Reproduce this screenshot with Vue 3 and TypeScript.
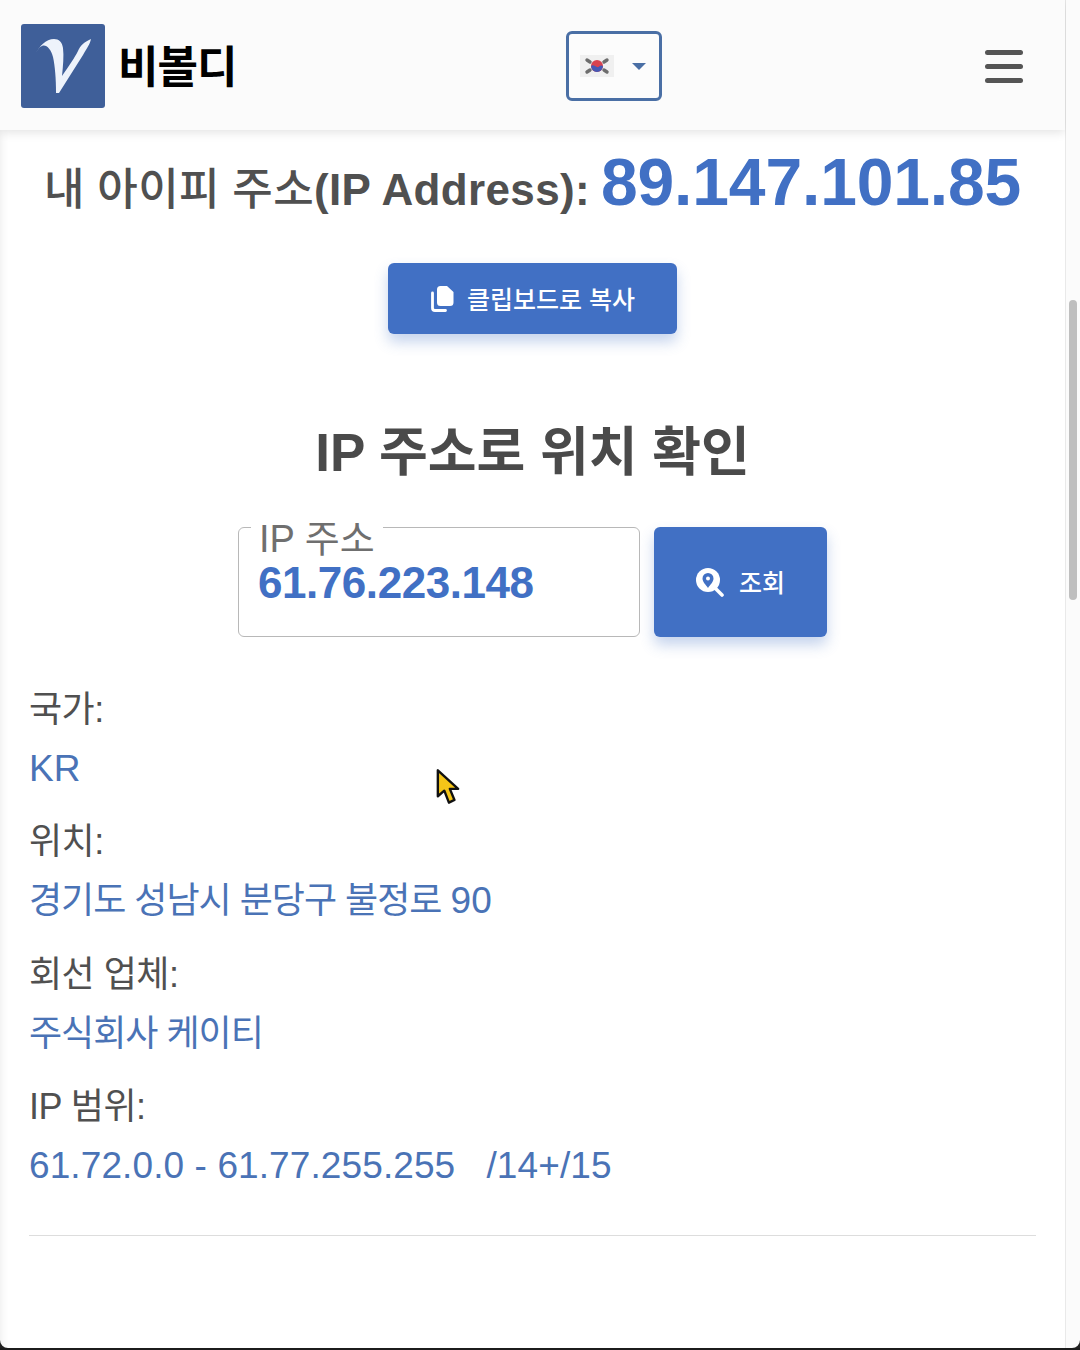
<script setup lang="ts">
interface Row { label: string; value: string; latin?: boolean; suffix?: string }
const rows: Row[] = [
  { label: '국가:', value: 'KR', latin: true },
  { label: '위치:', value: '경기도 성남시 분당구 불정로 ', suffix: '90' },
  { label: '회선 업체:', value: '주식회사 케이티' },
  { label: 'IP 범위:', value: '61.72.0.0 - 61.77.255.255\u00a0\u00a0\u00a0/14+/15', latin: true },
]
</script>

<template>
  <div class="page">
    <div class="main">
      <header class="nav">
        <div class="brand">
          <svg class="logo" viewBox="0 0 84 84" aria-label="logo">
            <rect width="84" height="84" rx="3" fill="#3f5f99" />
            <path d="M14 31 C18 22 25 15 33 15 C38 15 41 18 42 24 C43 32 42 42 41 52 C48 42 54 33 57 27 C59 22 63 18 70 15 C69 20 66 24 62 31 L38 69 L35 69 C35 55 34 42 32 33 C30 25 25 20 21 22 C18 23 16 27 14 31 Z" fill="#eef3fb" />
          </svg>
          <span class="brand-name">비볼디</span>
        </div>
        <button class="lang">
          <svg class="flag" viewBox="0 0 34 22">
            <rect width="34" height="22" fill="#f0f0f0" />
            <g stroke="#6d6d6d" stroke-width="3.4" stroke-linecap="round">
              <path d="M7 5 L10 7" /><path d="M27 5 L24 7" /><path d="M7 17 L10 15" /><path d="M27 17 L24 15" />
            </g>
            <circle cx="17" cy="11" r="6" fill="#d8434f" />
            <path d="M11 11 A6 6 0 0 0 23 11 C20 9 19 13 17 12 C15 11 13 9 11 11 Z" fill="#4658b5" />
          </svg>
          <span class="caret"></span>
        </button>
        <div class="burger"><i></i><i></i><i></i></div>
      </header>

      <section class="ip-line">
        <span class="ip-label">내 아이피 주소<b>(IP Address):</b></span>
        <span class="ip-value">89.147.101.85</span>
      </section>

      <div class="copy-wrap">
        <button class="btn copy">
          <svg class="ic-copy" viewBox="0 0 24 27">
            <path d="M2.500 8 V23 A2.500 2.500 0 0 0 5 25.500 H15.500" fill="none" stroke="#fff" stroke-width="2.800" stroke-linecap="round" />
            <path d="M10.500 1 H17 L23.500 7 V17.500 A3.500 3.500 0 0 1 20 21 H10.500 A3.500 3.500 0 0 1 7 17.500 V4.500 A3.500 3.500 0 0 1 10.500 1 Z" fill="#fff" />
          </svg>
          <span class="btn-text">클립보드로 복사</span>
        </button>
      </div>

      <h2 class="title">IP 주소로 위치 확인</h2>

      <div class="lookup">
        <div class="field">
          <span class="field-label">IP 주소</span>
          <span class="field-value">61.76.223.148</span>
        </div>
        <button class="btn search">
          <svg class="ic-search" viewBox="0 0 30 30">
            <path d="M19 20 L27 28" stroke="#fff" stroke-width="3.600" stroke-linecap="round" />
            <circle cx="13" cy="13" r="12" fill="#fff" />
            <path d="M13 6 A5.500 5.500 0 0 0 7.500 11.500 C7.500 15 11 18 13 21 C15 18 18.500 15 18.500 11.500 A5.500 5.500 0 0 0 13 6 Z" fill="#4170c4" />
            <circle cx="13" cy="11.500" r="2" fill="#fff" />
          </svg>
          <span class="btn-text">조회</span>
        </button>
      </div>

      <dl class="info">
        <div v-for="row in rows" :key="row.label" class="row">
          <dt>{{ row.label }}</dt>
          <dd :class="{ latin: row.latin }">{{ row.value }}<span v-if="row.suffix" class="latin">{{ row.suffix }}</span></dd>
        </div>
      </dl>
      <hr class="rule" />
    </div>

    <aside class="track"><div class="thumb"></div></aside>

    <svg class="cursor" viewBox="0 0 26 40">
      <path d="M2 2 L2 30 L9 24 L14 37 L20 34 L15 22 L24 22 Z" fill="#f5c518" stroke="#111" stroke-width="2.600" stroke-linejoin="round" />
    </svg>
    <svg class="corner corner-r" viewBox="0 0 8 8"><path d="M8 0 V8 H0 A8 8 0 0 0 8 0 Z" fill="#222" /></svg>
    <svg class="corner corner-l" viewBox="0 0 8 8"><path d="M0 0 V8 H8 A8 8 0 0 1 0 0 Z" fill="#222" /></svg>
  </div>
</template>

<style>
html, body { margin: 0; background: #fff; overflow: hidden; }
</style>

<style scoped>
.page {
  position: relative;
  width: 1080px;
  height: 1350px;
  display: flex;
  overflow: hidden;
  font-family: "Liberation Sans", "Noto Sans CJK KR", sans-serif;
  border-bottom: 2px solid #1c1c1c;
  box-sizing: border-box;
}
.main {
  width: 1066px;
  box-sizing: border-box;
  border-right: 1px solid #e9e9e9;
  background: #fff;
  box-shadow: inset 10px 0 10px -10px rgba(0, 0, 0, .1);
}
.nav {
  height: 130px;
  box-sizing: border-box;
  padding: 24px 42px 22px 21px;
  display: flex;
  align-items: center;
  background: #fbfbfb;
  box-shadow: 0 2px 10px rgba(0, 0, 0, .12);
  position: relative;
}
.brand { display: flex; align-items: center; gap: 13px; width: 545px; }
.logo { width: 84px; height: 84px; flex: none; }
.brand-name { font-size: 44px; padding-bottom: 4px; font-weight: 700; color: #000; letter-spacing: -1px; }
.lang {
  width: 96px;
  height: 70px;
  box-sizing: border-box;
  border: 3px solid #4a6fa5;
  border-radius: 6px;
  background: #fcfcfc;
  display: flex;
  align-items: center;
  padding: 0 0 0 11px;
}
.flag { width: 34px; height: 22px; filter: blur(.5px); }
.caret {
  margin-left: 18px;
  border-left: 7px solid transparent;
  border-right: 7px solid transparent;
  border-top: 7px solid #4a6fa5;
}
.burger {
  margin-left: auto;
  width: 38px;
  display: flex;
  flex-direction: column;
  gap: 9px;
}
.burger i { display: block; height: 5px; border-radius: 3px; background: #555; }
.ip-line {
  display: flex;
  align-items: baseline;
  justify-content: center;
  gap: 11px;
  height: 92px;
  padding-top: 17px;
  box-sizing: border-box;
  white-space: nowrap;
}
.ip-label { font-size: 44px; font-weight: 500; color: #505050; letter-spacing: .35px; }
.ip-label b { font-weight: 700; }
.ip-value { font-size: 66px; font-weight: 700; line-height: 70px; color: #4170c4; letter-spacing: -.15px; }
.copy-wrap { display: flex; justify-content: center; padding-top: 41px; }
.btn {
  border: 0;
  border-radius: 6px;
  background: #4170c4;
  color: #fff;
  font-family: inherit;
  font-weight: 500;
  display: flex;
  align-items: center;
  justify-content: center;
  box-shadow: 0 8px 14px rgba(65, 112, 196, .3);
}
.btn-text { padding-bottom: 2px; }
.copy { width: 289px; height: 71px; font-size: 25px; gap: 13px; }
.ic-copy { width: 24px; height: 27px; }
.title {
  margin: 87px 0 0;
  text-align: center;
  font-size: 53px;
  line-height: 64px;
  font-weight: 700;
  color: #4a4a4a;
}
.lookup { display: flex; justify-content: center; gap: 14px; margin-top: 42px; }
.field {
  position: relative;
  width: 402px;
  height: 110px;
  box-sizing: border-box;
  border: 1px solid #b8b8b8;
  border-radius: 6px;
  padding: 30px 0 0 19px;
}
.field-label {
  position: absolute;
  left: 12px;
  top: -11px;
  padding: 0 8px;
  background: #fff;
  font-size: 38px;
  line-height: 44px;
  color: #6f6f6f;
}
.field-value { font-size: 44px; line-height: 50px; font-weight: 700; color: #4170c4; letter-spacing: -.45px; }
.search { width: 173px; height: 110px; font-size: 25px; gap: 14px; }
.ic-search { width: 30px; height: 30px; margin-left: -1px; }
.info { margin: 41px 0 0; padding: 0 29px; }
.row { margin-bottom: 13.3px; }
.row dt { font-size: 36px; line-height: 63px; color: #505050; letter-spacing: -.5px; }
.row dd { margin: 0; font-size: 36px; line-height: 56px; color: #4a73b6; letter-spacing: -1px; }
.row dd.latin, .row dd .latin { font-size: 37px; letter-spacing: .1px; }
.rule { margin: 41px 29px 0; border: 0; border-top: 1px solid #ddd; }
.track { flex: 1; background: #fbfbfb; position: relative; }
.thumb { position: absolute; left: 3px; top: 300px; width: 8px; height: 300px; border-radius: 4px; background: #bfbfbf; }
.cursor { position: absolute; left: 436px; top: 768px; width: 24px; height: 38px; }
.corner { position: absolute; bottom: 0; width: 8px; height: 8px; }
.corner-r { right: 0; }
.corner-l { left: 0; }
</style>
